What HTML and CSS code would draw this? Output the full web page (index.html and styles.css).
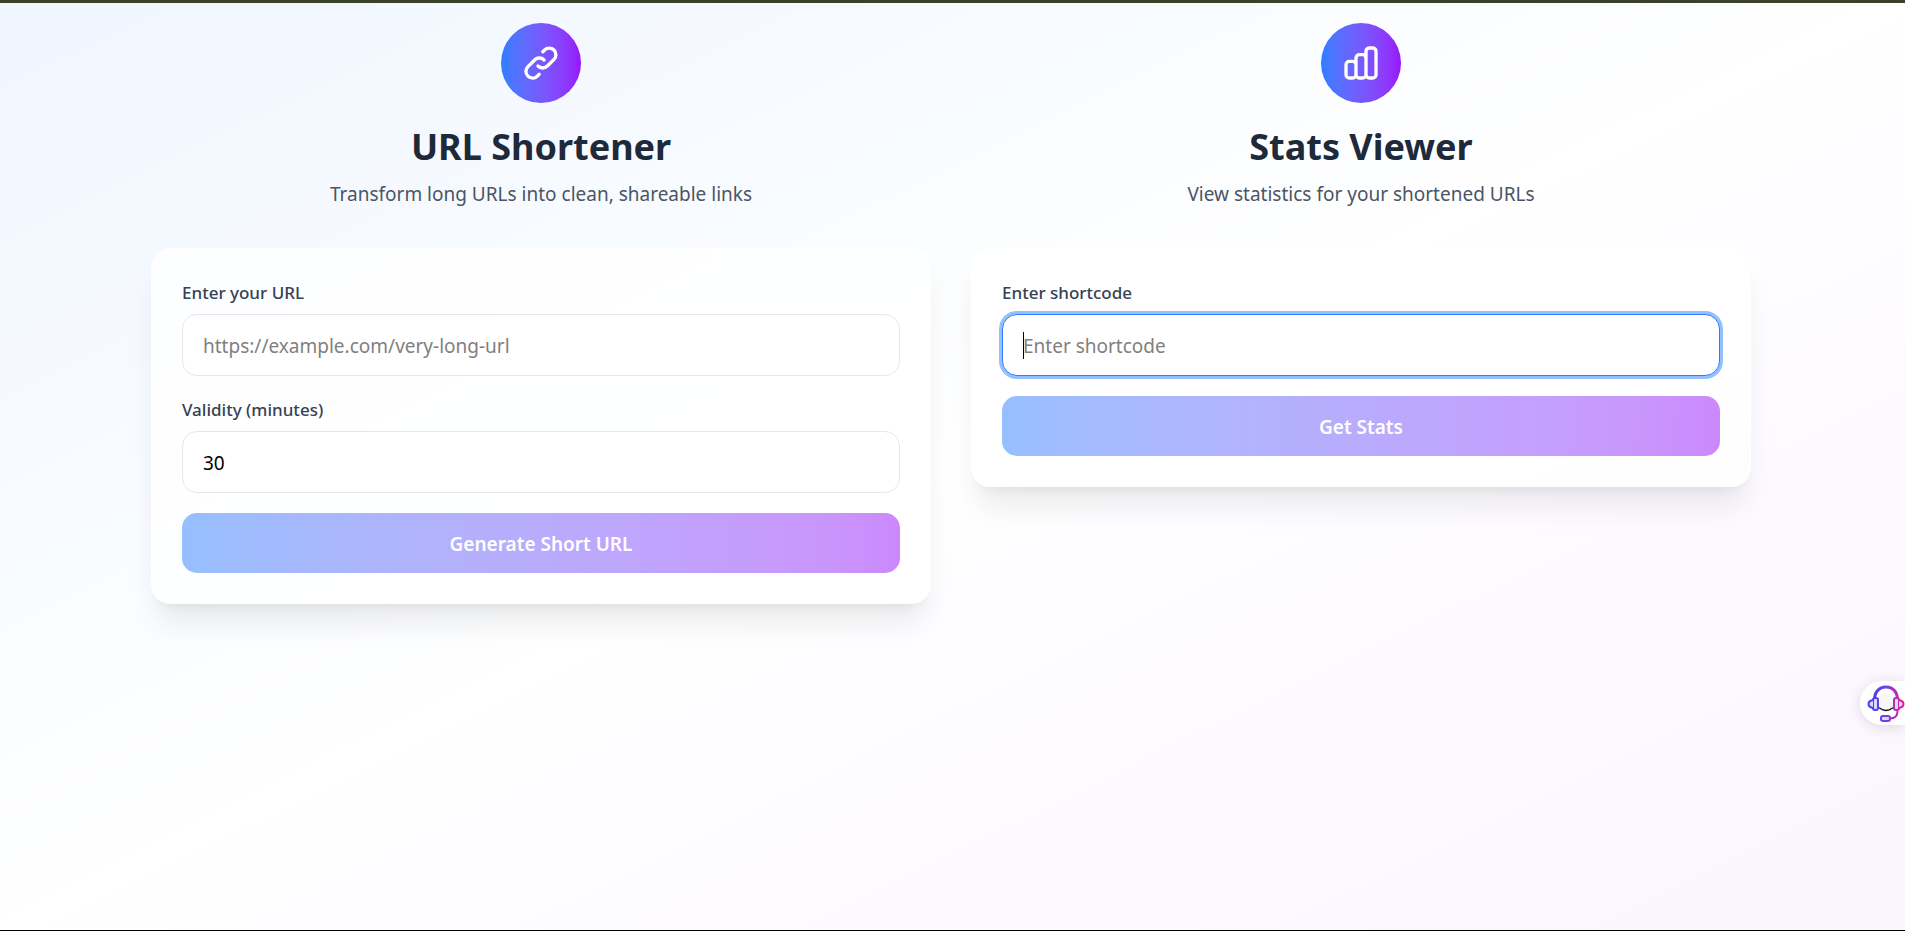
FILE: index.html
```html
<!DOCTYPE html>
<html lang="en">
<head>
<meta charset="utf-8">
<meta name="viewport" content="width=device-width, initial-scale=1">
<title>URL Shortener</title>
<link rel="stylesheet" href="styles.css">
</head>
<body>
<main class="page">
  <div class="columns">
    <section class="column">
      <header class="intro">
        <div class="badge">
          <svg class="badge-icon" viewBox="0 0 24 24" aria-hidden="true"><path d="M13.828 10.172a4 4 0 00-5.656 0l-4 4a4 4 0 105.656 5.656l1.102-1.101m-.758-4.899a4 4 0 005.656 0l4-4a4 4 0 00-5.656-5.656l-1.1 1.1"/></svg>
        </div>
        <h1 class="title">URL Shortener</h1>
        <p class="subtitle">Transform long URLs into clean, shareable links</p>
      </header>
      <form class="card">
        <div class="field">
          <label class="label" for="url">Enter your URL</label>
          <input class="input" id="url" type="url" placeholder="https://example.com/very-long-url">
        </div>
        <div class="field">
          <label class="label" for="validity">Validity (minutes)</label>
          <input class="input" id="validity" type="number" value="30">
        </div>
        <button class="button" type="button">Generate Short URL</button>
      </form>
    </section>
    <section class="column">
      <header class="intro">
        <div class="badge">
          <svg class="badge-icon" viewBox="0 0 24 24" aria-hidden="true"><path d="M9 19v-6a2 2 0 00-2-2H5a2 2 0 00-2 2v6a2 2 0 002 2h2a2 2 0 002-2zm0 0V9a2 2 0 012-2h2a2 2 0 012 2v10m-6 0a2 2 0 002 2h2a2 2 0 002-2m0 0V5a2 2 0 012-2h2a2 2 0 012 2v14a2 2 0 01-2 2h-2a2 2 0 01-2-2z"/></svg>
        </div>
        <h1 class="title">Stats Viewer</h1>
        <p class="subtitle">View statistics for your shortened URLs</p>
      </header>
      <form class="card">
        <div class="field">
          <label class="label" for="code">Enter shortcode</label>
          <div class="input-wrap">
            <input class="input input-active" id="code" type="text" placeholder="Enter shortcode">
            <span class="caret"></span>
          </div>
        </div>
        <button class="button" type="button">Get Stats</button>
      </form>
    </section>
  </div>
</main>
<button class="support" type="button" aria-label="Support">
  <svg class="support-icon" viewBox="0 0 38 40" aria-hidden="true">
    <defs>
      <linearGradient id="headset" gradientUnits="userSpaceOnUse" x1="0" y1="0" x2="38" y2="0">
        <stop offset="0" stop-color="#3b3bf5"/>
        <stop offset="0.45" stop-color="#6a40f0"/>
        <stop offset="0.8" stop-color="#c02aa8"/>
        <stop offset="1" stop-color="#f0148c"/>
      </linearGradient>
    </defs>
    <circle cx="19" cy="19" r="9" fill="#f7f7f7"/>
    <path d="M7.500 17C7.500 9 12 4 19 4s11.500 5 11.500 13" fill="none" stroke="url(#headset)" stroke-width="3"/>
    <path d="M30.500 28c0 5-2 7.500-7.500 7.500" fill="none" stroke="url(#headset)" stroke-width="2"/>
    <g fill="#dcd8ff" stroke="url(#headset)" stroke-width="2" stroke-linejoin="round">
      <rect x="6" y="15" width="5" height="12" rx="2"/>
      <rect x="27" y="15" width="5" height="12" rx="2"/>
      <rect x="14" y="33" width="9" height="5" rx="2"/>
      <path d="M6 17Q1.500 18 1.500 21T6 25M32 17q4.500 1 4.500 4T32 25"/>
    </g>
    <path d="M12.500 25q6.500 5 13 0" fill="none" stroke="#111" stroke-width="1.300" stroke-linecap="round"/>
  </svg>
</button>
</body>
</html>
```
FILE: styles.css
```css
* {
  box-sizing: border-box;
}

body {
  margin: 0;
  font-family: "Segoe UI", "Noto Sans", "Open Sans", sans-serif;
  color: #000;
}

.page {
  min-height: 100vh;
  padding: 20px 3px 20px 0;
  border-top: 3px solid #3b4028;
  border-bottom: 1px solid #000;
  background: linear-gradient(to bottom right in oklab, #eff6ff, #fff, #faf5ff) border-box;
}

.columns {
  display: grid;
  grid-template-columns: repeat(auto-fit, minmax(320px, 1fr));
  align-items: start;
  gap: 40px;
  max-width: 1600px;
  margin: 0 auto;
}

.intro {
  display: flex;
  flex-direction: column;
  align-items: center;
  margin-bottom: 39px;
  text-align: center;
}

.badge {
  display: flex;
  align-items: center;
  justify-content: center;
  width: 80px;
  height: 80px;
  margin-bottom: 21px;
  border-radius: 50%;
  background: linear-gradient(to right in oklab, #2b7fff, #9810fa);
}

.badge-icon {
  width: 40px;
  height: 40px;
  fill: none;
  stroke: #fff;
  stroke-width: 2;
  stroke-linecap: round;
  stroke-linejoin: round;
}

.title {
  margin: 0 0 10px;
  font-size: 36px;
  font-weight: 700;
  line-height: 45px;
  color: #1e2939;
}

.subtitle {
  margin: 0;
  font-size: 19px;
  line-height: 30px;
  color: #4a5565;
}

.card {
  display: flex;
  flex-direction: column;
  gap: 20px;
  padding: 30px;
  border: 1px solid rgba(255, 255, 255, 0.2);
  border-radius: 20px;
  background: rgba(255, 255, 255, 0.8);
  box-shadow: 0 25px 31px -6px rgba(0, 0, 0, 0.08), 0 10px 12px -8px rgba(0, 0, 0, 0.06);
}

.field {
  display: flex;
  flex-direction: column;
  gap: 9px;
}

.label {
  padding-top: 1px;
  font-size: 17px;
  font-weight: 500;
  line-height: 25px;
  color: #364153;
}

.input-wrap {
  position: relative;
}

.input {
  display: block;
  width: 100%;
  height: 62px;
  padding: 16px 20px 14px;
  border: 1px solid #e5e7eb;
  border-radius: 15px;
  outline: none;
  background: #fff;
  font: inherit;
  font-size: 19px;
  line-height: 30px;
  color: #000;
  appearance: textfield;
}

.input::placeholder {
  color: #808080;
  opacity: 1;
}

.input-active,
.input:focus {
  border-color: #2b7fff;
  box-shadow: 0 0 0 3px rgba(43, 127, 255, 0.5);
}

.caret {
  position: absolute;
  top: 18px;
  left: 21px;
  width: 1px;
  height: 27px;
  background: #000;
}

.input:focus + .caret {
  display: none;
}

.button {
  height: 60px;
  padding: 2px 20px 0;
  border: 0;
  border-radius: 15px;
  background: linear-gradient(to right in oklab, #2b7fff, #9810fa);
  font: inherit;
  font-size: 19px;
  font-weight: 600;
  line-height: 30px;
  color: #fff;
  opacity: 0.5;
}

.support {
  position: fixed;
  top: 681px;
  right: 0;
  display: flex;
  align-items: center;
  width: 45px;
  height: 44px;
  padding: 0 0 0 7px;
  border: 0;
  border-radius: 22px 0 0 22px;
  background: #fff;
  box-shadow: 0 2px 14px rgba(0, 0, 0, 0.12);
}

.support-icon {
  flex: none;
  width: 38px;
  height: 40px;
}
```
